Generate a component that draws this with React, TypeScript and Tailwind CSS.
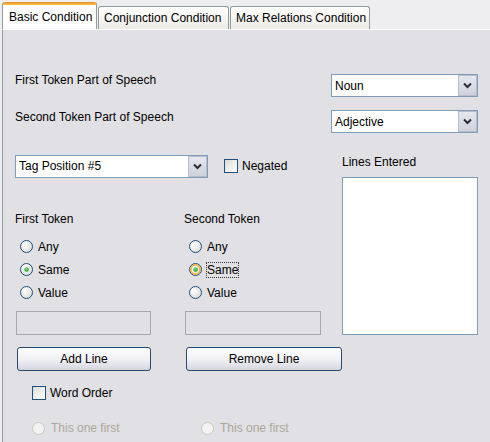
import React from "react";

const font = { fontFamily: '"Liberation Sans", Arial, sans-serif' };

function Chevron() {
  return (
    <svg width="9" height="7" viewBox="0 0 9 7">
      <path d="M1 1.5 L4.5 5 L8 1.5" fill="none" stroke="#2b2b3a" strokeWidth="2" />
    </svg>
  );
}

function Combo({ value, w }: { value: string; w: string }) {
  return (
    <div className={`${w} h-[23px] flex bg-white border border-[#7f9db9] shrink-0`}>
      <div className="flex-1 flex items-center pl-[3px] text-[12px] text-black">{value}</div>
      <div className="w-[19px] h-full flex items-center justify-center bg-gradient-to-b from-[#e6e7ee] to-[#cfd1dc] border border-[#b7bdd0]">
        <Chevron />
      </div>
    </div>
  );
}

function Check() {
  return (
    <div className="w-[14px] h-[14px] border border-[#1c5180] bg-gradient-to-br from-[#dcdcd7] to-white shrink-0" />
  );
}

function Radio({ checked, hover, disabled }: { checked?: boolean; hover?: boolean; disabled?: boolean }) {
  return (
    <svg width="13" height="13" viewBox="0 0 13 13" className="shrink-0">
      <defs>
        <radialGradient id="rg" cx="0.35" cy="0.35" r="0.8">
          <stop offset="0" stopColor="#ffffff" />
          <stop offset="1" stopColor="#d8d8d2" />
        </radialGradient>
        <radialGradient id="dot" cx="0.4" cy="0.35" r="0.7">
          <stop offset="0" stopColor="#7ce37c" />
          <stop offset="1" stopColor="#1c9a1c" />
        </radialGradient>
      </defs>
      <circle cx="6.5" cy="6.5" r="6" fill={disabled ? "#f2f1f3" : "url(#rg)"} stroke={disabled ? "#cac8bb" : "#1c5180"} strokeWidth="1" />
      {hover && <circle cx="6.5" cy="6.5" r="4.6" fill="none" stroke="#f5b13a" strokeWidth="1.6" />}
      {checked && <circle cx="6.5" cy="6.5" r="2.3" fill="url(#dot)" />}
    </svg>
  );
}

function RadioRow({ label, checked, hover, focus, disabled }: { label: string; checked?: boolean; hover?: boolean; focus?: boolean; disabled?: boolean }) {
  return (
    <div className="flex items-center h-[23px]">
      <div className="ml-[5px]">
        <Radio checked={checked} hover={hover} disabled={disabled} />
      </div>
      <span
        className={`ml-[5px] text-[12px] leading-[14px] ${disabled ? "text-[#aca899]" : "text-black"} ${focus ? "outline-1 outline-dotted outline-[#333]" : ""}`}
      >
        {label}
      </span>
    </div>
  );
}

function Btn({ label, w }: { label: string; w: string }) {
  return (
    <div className={`${w} h-[24px] rounded-[3px] border border-[#2c4a6e] bg-gradient-to-b from-white via-[#f2f2f6] to-[#d5d5e0] flex items-center justify-center text-[12px] text-black`}>
      {label}
    </div>
  );
}

export default function App() {
  return (
    <div className="w-[490px] h-[442px] overflow-hidden bg-[#eeedf0] flex flex-col" style={font}>
      {/* Tab strip */}
      <div className="h-[29px] flex items-end pl-[2px] shrink-0">
        <div className="h-[27px] w-[95px] bg-white border-x border-[#919b9c] rounded-t-[3px] flex flex-col">
          <div className="h-[3px] bg-gradient-to-b from-[#e68b2c] to-[#ffc73c] rounded-t-[2px]" />
          <div className="flex-1 flex items-center pl-[6px] text-[12px] text-black">Basic Condition</div>
        </div>
        <div className="h-[23px] w-[131px] ml-[1px] bg-gradient-to-b from-white to-[#ecebe6] border-x border-t border-[#919b9c] rounded-t-[3px] flex items-center pl-[5px] text-[12px] text-black">
          Conjunction Condition
        </div>
        <div className="h-[23px] w-[140px] ml-[1px] bg-gradient-to-b from-white to-[#ecebe6] border-x border-t border-[#919b9c] rounded-t-[3px] flex items-center pl-[5px] text-[12px] text-black">
          Max Relations Condition
        </div>
      </div>

      {/* Panel */}
      <div className="flex-1 ml-[2px] border-l border-t border-l-[#919b9c] border-t-white bg-[#e1e0e5] flex flex-col pl-[12px] pr-[12px]">
        {/* Row 1 */}
        <div className="mt-[44px] h-[23px] flex items-start justify-between">
          <span className="text-[12px] leading-[14px] mt-[-1px] text-black">First Token Part of Speech</span>
          <Combo value="Noun" w="w-[147px]" />
        </div>
        {/* Row 2 */}
        <div className="mt-[13px] h-[23px] flex items-start justify-between">
          <span className="text-[12px] leading-[14px] text-black">Second Token Part of Speech</span>
          <Combo value="Adjective" w="w-[147px]" />
        </div>

        {/* Main */}
        <div className="mt-[21px] flex">
          <div className="flex-1 min-w-0 flex flex-col">
            <div className="h-[24px] flex items-center">
              <Combo value="Tag Position #5" w="w-[193px]" />
              <div className="ml-[16px]"><Check /></div>
              <span className="ml-[4px] text-[12px] text-black">Negated</span>
            </div>
            <div className="mt-[33px] grid grid-cols-[169px_1fr]">
              <div className="flex flex-col">
                <div className="h-[14px] flex items-center text-[12px] text-black mt-[1px]">First Token</div>
                <div className="mt-[9px] flex flex-col">
                  <RadioRow label="Any" />
                  <RadioRow label="Same" checked />
                  <RadioRow label="Value" />
                </div>
                <div className="mt-[7px] ml-[1px] w-[135px] h-[24px] border border-[#a9a8ae] bg-[#e1e0e5]" />
              </div>
              <div className="flex flex-col">
                <div className="h-[14px] flex items-center text-[12px] text-black mt-[1px]">Second Token</div>
                <div className="mt-[9px] flex flex-col">
                  <RadioRow label="Any" />
                  <RadioRow label="Same" checked hover focus />
                  <RadioRow label="Value" />
                </div>
                <div className="mt-[7px] ml-[1px] w-[136px] h-[24px] border border-[#a9a8ae] bg-[#e1e0e5]" />
              </div>
            </div>
          </div>
          <div className="w-[136px] shrink-0 flex flex-col">
            <div className="h-[16px] flex items-center text-[12px] text-black">Lines Entered</div>
            <div className="mt-[7px] h-[158px] bg-white border border-[#7f9db9]" />
          </div>
        </div>

        {/* Buttons */}
        <div className="mt-[12px] grid grid-cols-[169px_169px]">
          <div className="ml-[2px]"><Btn label="Add Line" w="w-[134px]" /></div>
          <div className="ml-[2px]"><Btn label="Remove Line" w="w-[156px]" /></div>
        </div>

        {/* Word order */}
        <div className="mt-[14px] h-[16px] flex items-center pl-[17px]">
          <Check />
          <span className="ml-[4px] text-[12px] text-black">Word Order</span>
        </div>

        {/* This one first */}
        <div className="mt-[19px] grid grid-cols-[169px_169px]">
          <div className="pl-[17px] flex items-center h-[16px]">
            <Radio disabled />
            <span className="ml-[6px] text-[12px] text-[#aca899]">This one first</span>
          </div>
          <div className="pl-[17px] flex items-center h-[16px]">
            <Radio disabled />
            <span className="ml-[6px] text-[12px] text-[#aca899]">This one first</span>
          </div>
        </div>
      </div>
    </div>
  );
}
